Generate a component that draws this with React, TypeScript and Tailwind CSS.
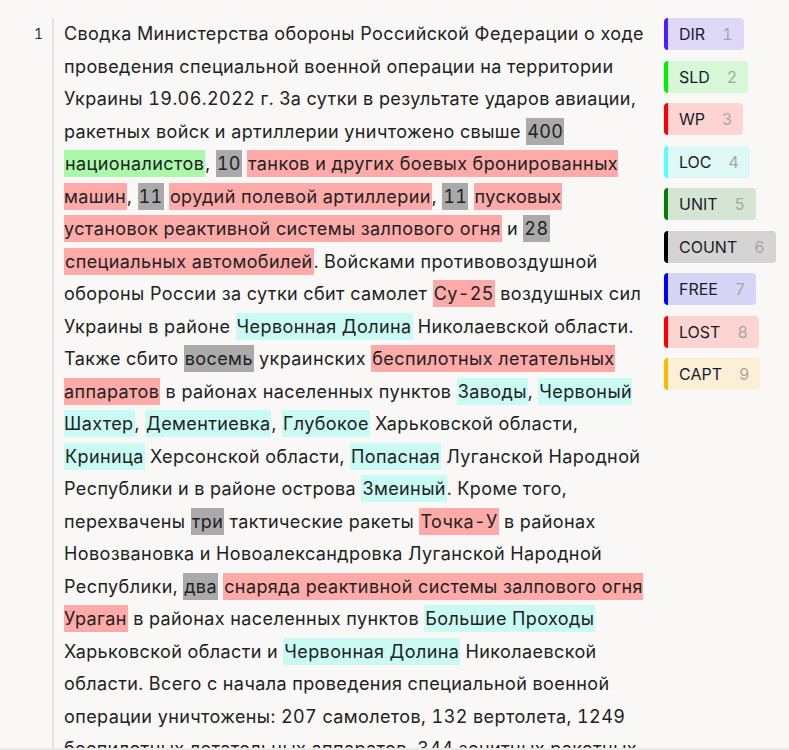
import React from "react";

type Tag = "count" | "sld" | "wp" | "loc" | null;

// text segments: [text, tag]
const segments: [string, Tag][] = [
  ["Сводка Министерства обороны Российской Федерации о ходе проведения специальной военной операции на территории Украины 19.06.2022 г. За сутки в результате ударов авиации, ракетных войск и артиллерии уничтожено свыше ", null],
  ["400", "count"],
  [" ", null],
  ["националистов", "sld"],
  [", ", null],
  ["10", "count"],
  [" ", null],
  ["танков и других боевых бронированных машин", "wp"],
  [", ", null],
  ["11", "count"],
  [" ", null],
  ["орудий полевой артиллерии", "wp"],
  [", ", null],
  ["11", "count"],
  [" ", null],
  ["пусковых установок реактивной системы залпового огня", "wp"],
  [" и ", null],
  ["28", "count"],
  [" ", null],
  ["специальных автомобилей", "wp"],
  [". Войсками противовоздушной обороны России за сутки сбит самолет ", null],
  ["Су-25", "wp"],
  [" воздушных сил Украины в районе ", null],
  ["Червонная Долина", "loc"],
  [" Николаевской области. Также сбито ", null],
  ["восемь", "count"],
  [" украинских ", null],
  ["беспилотных летательных аппаратов", "wp"],
  [" в районах населенных пунктов ", null],
  ["Заводы", "loc"],
  [", ", null],
  ["Червоный Шахтер", "loc"],
  [", ", null],
  ["Дементиевка", "loc"],
  [", ", null],
  ["Глубокое", "loc"],
  [" Харьковской области, ", null],
  ["Криница", "loc"],
  [" Херсонской области, ", null],
  ["Попасная", "loc"],
  [" Луганской Народной Республики и в районе острова ", null],
  ["Змеиный", "loc"],
  [". Кроме того, перехвачены ", null],
  ["три", "count"],
  [" тактические ракеты ", null],
  ["Точка-У", "wp"],
  [" в районах Новозвановка и Новоалександровка Луганской Народной Республики, ", null],
  ["два", "count"],
  [" ", null],
  ["снаряда реактивной системы залпового огня Ураган", "wp"],
  [" в районах населенных пунктов ", null],
  ["Большие Проходы", "loc"],
  [" Харьковской области и ", null],
  ["Червонная Долина", "loc"],
  [" Николаевской области. Всего с начала проведения специальной военной операции уничтожены: 207 самолетов, 132 вертолета, 1249 беспилотных летательных аппаратов, 344 зенитных ракетных комплекса, 3907 танков и других боевых бронированных машин.", null],
];

const tagClass: Record<string, string> = {
  count: "bg-[#aaaaaa]",
  sld: "bg-[#aaf9aa]",
  wp: "bg-[#fdaaa9]",
  loc: "bg-[#c9faf4]",
};

const legend = [
  { label: "DIR", num: 1, bar: "border-[#4a1fff]", bg: "bg-[#ddd8f7]" },
  { label: "SLD", num: 2, bar: "border-[#00f000]", bg: "bg-[#d6f8d6]" },
  { label: "WP", num: 3, bar: "border-[#ff0000]", bg: "bg-[#fcd5d3]" },
  { label: "LOC", num: 4, bar: "border-[#55ffff]", bg: "bg-[#def8f5]" },
  { label: "UNIT", num: 5, bar: "border-[#008000]", bg: "bg-[#d5e5d4]" },
  { label: "COUNT", num: 6, bar: "border-[#000000]", bg: "bg-[#d5d4d3]" },
  { label: "FREE", num: 7, bar: "border-[#0000ff]", bg: "bg-[#d6d5f7]" },
  { label: "LOST", num: 8, bar: "border-[#ff0000]", bg: "bg-[#fcd5d3]" },
  { label: "CAPT", num: 9, bar: "border-[#ffb800]", bg: "bg-[#fcefd5]" },
];

export default function App() {
  return (
    <div className="h-screen overflow-hidden bg-[#f9f8f7] text-[#222222] font-['Inter',sans-serif] tabular-nums border-b-2 border-[#ebeae9]">
      <div className="flex pt-[18px]">
        {/* gutter */}
        <div className="w-[54px] shrink-0 border-r-2 border-[#e3e2e1] pr-[9px] text-right text-[14px] leading-[32.5px] text-[#333] h-[740px]">
          1
        </div>

        {/* annotated text */}
        <p className="w-[594px] shrink-0 pl-[10px] text-[18px] leading-[32.5px] tracking-[0.4px]">
          {segments.map(([t, tag], i) =>
            tag ? (
              <span key={i} className={`${tagClass[tag]} px-[1px] py-[3px]`}>
                {t}
              </span>
            ) : (
              <React.Fragment key={i}>{t}</React.Fragment>
            )
          )}
        </p>

        {/* label legend */}
        <div className="ml-[16px] flex flex-col items-start gap-[10.5px]">
          {legend.map((l) => (
            <div
              key={l.label}
              className={`flex h-8 items-center gap-[17px] rounded-[4px] border-l-4 pl-[11px] pr-[11px] text-[16px] ${l.bar} ${l.bg}`}
            >
              <span className="text-[#1a1a2a]">{l.label}</span>
              <span className="text-[#a8a6a4]">{l.num}</span>
            </div>
          ))}
        </div>
      </div>
    </div>
  );
}
